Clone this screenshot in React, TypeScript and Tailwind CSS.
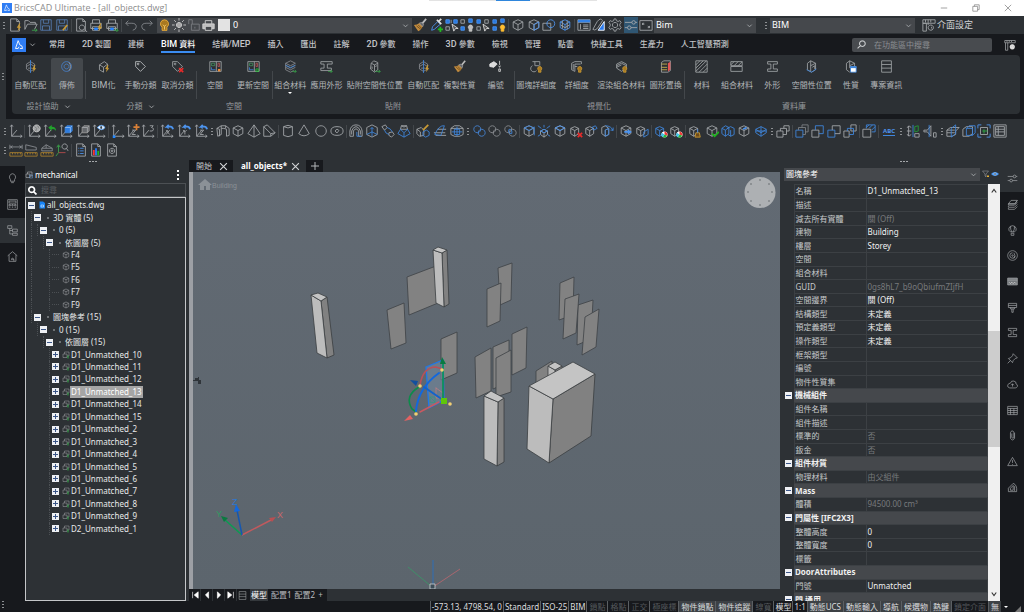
import React, { useState } from 'react';

const G = '#a4a7aa';
const B = '#3f86dc';
const Y = '#c99a35';

// Stroke helper, every glyph is drawn on a 16x16 grid
const p = (d: string, stroke = G, fill = 'none', w = 1) => (
  <path key={d + stroke} d={d} stroke={stroke} fill={fill} strokeWidth={w} />
);

const CUBE = 'M8 2 13.5 4.5V11L8 14 2.500 11V4.500ZM2.500 4.500 8 7.500l5.500-3M8 7.500V14';
const AXES = 'M3 1v13h12M1.500 3 3 1l1.500 2M13 12.500 15 14l-2 1.500M3 14l6-7';
const SMALL_CUBE = 'M6.500 3 11 5v6l-4.500 3L2 11V5ZM2 5l4.500 2.500L11 5M6.500 7.500V14';
const BULB = 'M12 8a2.500 2.500 0 0 1 1.500 4.500V15h-3v-2.500A2.500 2.500 0 0 1 12 8Z';
const CIRCLES = 'M6 2a4 4 0 1 0 .1 0M11 6a4 4 0 1 0 .1 0';
const RULER = 'M1 11h14v4H1ZM4 11v2M7 11v2M10 11v2M13 11v2';
const PAGE = 'M3 1h7l3 3v11H3ZM10 1v3h3';
const PRINTER = 'M4 6V2h8v4M2 6h12v6H2ZM4 10h8v4H4Z';
const BOLT = 'M13 6 10 11h2l-1 4 4-5h-2l1-4Z';
const PALETTE = (
  <g stroke="none">
    <circle cx="12" cy="12" r="3.500" fill="#fff" />
    <path d="M12 12V8.500a3.500 3.500 0 0 1 3 5Z" fill="#f03a3a" />
    <path d="m12 12 3 1.500a3.500 3.500 0 0 1-5 1.500Z" fill="#28b63a" />
    <path d="m12 12-2 3a3.500 3.500 0 0 1-1-5Z" fill="#3fc4ea" />
  </g>
);

const glyphs: Record<string, React.ReactNode> = {
  new: <>{p(PAGE)}{p(BOLT, 'none', Y)}</>,
  open: <>{p('M1 13V3h4l2 2h6v2M1 13l3-6h11l-3 6')}{p('M9 14h6M13 12l2 2-2 1.500', '#3aa34a')}</>,
  save: <>{p('M2 2h12v12H2ZM5 2v4h6V2M4 14V9h8v5', '#5479ab')}</>,
  saveAs: <>{p('M2 2h12v12H2ZM5 2v4h6V2M4 14V9h8v5', '#5479ab')}{p('m9 14 5-6', Y, 'none', 2)}</>,
  preview: <>{p(PAGE)}{p('M9 8a3 3 0 1 0 .1 0M12 13l3 3')}</>,
  printer: p(PRINTER),
  printBolt: <>{p(PRINTER)}{p('M6 11h4v3H6Z', 'none', '#2684ff')}{p(BOLT, 'none', Y)}</>,
  printGo: <>{p(PRINTER)}{p('M6 11h4v3H6Z', 'none', '#2684ff')}{p('M10 14h5M13 12l2 2-2 2', '#3aa34a')}</>,
  undo: p('M5 3 2 6l3 3M2 6h7q5 0 5 4 0 3-4 4', '#83878b'),
  redo: p('m11 3 3 3-3 3M14 6H7q-5 0-5 4 0 3 4 4', '#83878b'),
  bulb: <>{p('M8 1a5 5 0 0 1 3 9v4H5v-4A5 5 0 0 1 8 1Z', '#f0b23c', '#a87820')}{p('M6 7l2 2 2-2M8 9v4', '#ffd675')}</>,
  sun: <>{p('M8 5a3 3 0 1 0 .1 0', '#ccc', '#aaa')}{p('M8 0v3M8 13v3M0 8h3M13 8h3M2.500 2.500l2 2M11.500 11.500l2 2M13.500 2.500l-2 2M4.500 11.500l-2 2', '#ccc')}</>,
  lock: p('M2 2v5M2 2h4v5M5 7h9v7H5ZM9 10v2', '#7b7e82'),
  printSolid: <>{p('M4 6V2h8v4', '#ddd')}{p('M1 6h14v6H1Z', '#ddd', '#bbb')}{p('M4 9h8v5H4Z', '#ddd', '#46494d')}</>,
  brush: <>{p('m15 1-5 6', '#bbb', 'none', 2)}{p('m7 6 3-1 2 2-1 3Z', '#999', '#66696d')}{p('M1 8q4 0 6-2l4 4q-2 4-5 5Z', 'none', '#c08a3e')}{p('M4 9l5 4M6 8l4 4', '#6e4b1b')}</>,
  pick: <>{p('m3 14 1-4 6-6 3 3-7 6Z', '#4d94ee')}{p('m9 2 5 5M11 4l3-3', '#ddd', 'none', 2)}{p('M13 10v6M10 13h6', '#20b820', 'none', 2)}</>,
  gridPick: <>{p('M1 2h4v4H1ZM10 2h4v4h-4Z', '#4d94ee', '#2778df')}{p('M1 10h4v4H1ZM7 2v4')}{p('m8 7 2 8 2-3 3 0Z', '#ddd', '#555')}</>,
  gridBulb: <>{p('M1 2h4v4H1Z')}{p('M10 1h4v4h-4ZM1 10h4v4H1Z', '#4d94ee', '#2778df')}{p(BULB, '#ccc', '#bbb')}</>,
  gridPick2: <>{p('M1 2h4v4H1Z', '#4d94ee', '#2778df')}{p('M10 2h4v4h-4ZM1 10h4v4H1Z')}{p('m8 7 2 8 2-3 3 0Z', '#ddd', '#555')}</>,
  gridLight: <>{p('M1 2h4v4H1ZM10 1h4v4h-4ZM1 10h4v4H1Z', '#4d94ee', '#2778df')}{p(BULB, '#ffbd30', '#ffbd30')}</>,
  cube: p(CUBE),
  cubeEdge: <>{p(CUBE)}{p('M13.500 4.500V11L8 14V7.500Z', '#4d94ee')}</>,
  cubeCircle: <>{p('M1 6h9v8H1Z')}{p('M10 2a4.500 4.500 0 1 0 .1 0', '#4d94ee')}</>,
  cubeBlue: <>{p(CUBE, '#4d94ee')}{p('M5 3v9M10.500 3v10M3 8l5 3 5-3')}</>,
  table: <>{p('M1 2h14v12H1ZM1 5h14')}{p('M1 2h14v3H1Z', 'none', '#3482e5')}{p('M4 7v6M7 8h6M7 10h6M7 12h6')}</>,
  sheets: <>{p('M6 4q4-5 6-1l-6 9q-3 3-5 1Z')}{p('M14 4v10H7Z', '#fff', '#2779ef')}</>,
  gear: <>{p('M8 5a3 3 0 1 0 .1 0')}{p('M7 1h2l.5 2 2 1 2-1 1.500 2-1.500 2v2l1.500 2-1.500 2-2-1-2 1L9 15H7l-.5-2-2-1-2 1L1 11l1.500-2V7L1 5l1.500-2 2 1 2-1Z')}</>,
  sliders: p('M1 5h8M13 5h2M9 5a2 2 0 1 0 4 0 2 2 0 0 0-4 0M1 11h3M8 11h7M4 11a2 2 0 1 0 4 0 2 2 0 0 0-4 0'),
  screen: p('M1 3h14v11H1ZM4 6l2 2M12 11l-2-2M4 8V6h2M12 9v2h-2'),
  ui: <>{p('M1 2h14v4H1ZM1 6h4v9H1ZM4 2v3M7 2v3M10 2v3')}{p('M10 8a3 3 0 1 0 .1 0M11 10v2M7 5v3')}</>,
  uiGear: <>{p('M1 2h14v3H1ZM5 5v10H2V5M4 2v2M7 2v2M10 2v2')}{p('M11 8a2.500 2.500 0 1 0 .1 0M11 7v7M8 11h6', '#ddd', 'none', 2)}</>,
  autoMatch: <>{p('M3 5l5-3 5 3v6l-5 3-5-3ZM3 8l5-3 5 3M5 10h5', '#8b8e92')}{p('M8 0v16', B, 'none', 1)}{p(BOLT, 'none', Y)}</>,
  spread: <>{p('M8 2a6 6 0 1 0 .1 0M8 5a3 3 0 1 0 .1 0', '#4584d4')}{p('M11 3q4 5 0 10', '#9b9ea2')}</>,
  bimify: <>{p('M3 6l6-4 4 3-5 4ZM3 6v6l5 3V9M13 5v5')}{p(BOLT, 'none', Y)}</>,
  tag: p('M2 2h6l6 6-6 6-6-6ZM5 4a1 1 0 1 0 .1 0', '#c2c4c6'),
  tagX: <>{p('M2 2h6l6 6-6 6-6-6ZM5 4a1 1 0 1 0 .1 0')}{p('m10 10 5 5M15 10l-5 5', '#e92929', 'none', 2)}</>,
  room: <>{p('M1 2h14v12H1ZM9 2v12')}{p('M3 4h4v3H3Z', '#43915e')}{p('M11 4h2v4h-2Z', '#b45555')}{p('M3 9v3h5', B)}{p('M11 11h3v3h-3Z', 'none', '#ef8b36')}</>,
  roomUpdate: <>{p('M1 2h14v12H1ZM9 2v12')}{p('M3 4h4v3H3Z', '#43915e')}{p('M11 4h2v4h-2Z', '#b45555')}{p('M3 9v3h5', B)}{p('M11 11h3v3h-3Z', '#20c735', 'none', 1)}</>,
  layers: <>{p('M8 1 14 4 8 7 2 4ZM2 4v8l6 3 4-2M2 6.500l6 3 6-3M2 9l6 3 6-3', '#8b8e92')}{p('M2 6.500l6 3 6-3', B)}{p('M10 14h5M13 12l2 2-2 2', '#3aa34a')}</>,
  profile: <>{p('M1 2h14v3H9v5h5v3H1v-3h4V5H1Z')}{p('M10 14h5M13 12l2 2-2 2', '#3aa34a')}</>,
  location: <>{p('M4 4l3-3 5 2v9l-4 3-5-4ZM4 4l4 2v8M8 6l4-2M9 8l2-1M5 8v3')}{p('M9 14h6M13 12l2 2-2 2', '#3aa34a')}</>,
  number: <>{p('M1 5l5-3 4 3-4 4-5-1Z', '#eee', '#ddd')}{p('M13 1v5M12 7l1 2 1-2M12 11h2v3h-2Z', '#ddd')}</>,
  blockLod: <>{p('M3 2h9v5M3 7a4 4 0 1 0 5 6M6 2v5h5')}{p(BULB, Y, '#a87820')}</>,
  lod: <>{p('M2 4l4-2h8v3M2 4v8l4 2V5h7M4 5v7M6 8h3')}{p(BULB, Y, '#a87820')}</>,
  render: <>{p('M2 5l6-3 6 3v5l-6 4-6-4ZM2 7l6-3 6 3M2 9l6-3')}{p(BULB, Y, '#a87820')}</>,
  override: <>{p('M3 3l3-2h8v12l-3 2H3Z')}{p('M11 4l3-2v10l-3 2Z', 'none', '#e45454')}{p('M3 5h7M3 9h7M3 12h7', '#d6bb50')}</>,
  hatch: p('M1 1h14v14H1ZM1 6l5-5M1 10l9-9M1 14 14 1M5 15 15 5M10 15l5-5'),
  halfHatch: p('M1 2h14v5H1ZM1 8h14v6H1ZM1 6l4-4M5 7l5-5M10 7l5-5'),
  beam: p('M2 2h12v3H9v6h5v3H2v-3h4V5H2Z'),
  spatial: <>{p('M3 4l4-3 6 3v8l-5 3-5-3ZM7 1v13M7 7l6-3M9 9l3-2v4')}{p('M2 12l6 3 6-4', B)}</>,
  props: <>{p('M3 4l4-3 6 3v4M3 4v8l4 3M7 1v9M7 7l6-3')}{p('M8 8h7v7H8Z', '#3f86dc', '#fff')}{p('M8 8h7v2H8Z', 'none', '#3f86dc')}</>,
  info: p('M2 1h12v14H2ZM2 5.500h12M2 10h12'),
  ucs: p(AXES),
  ucsWorld: <>{p(AXES)}{p('M11 1a4 4 0 1 0 .1 0', '#ccc', '#a5a8aa')}{p('M9 3l2 2-1 3M12 2l2 3', '#777')}</>,
  ucsBack: <>{p(AXES)}{p('M6 4l4-3v2q5 0 5 5-2-3-5-2v2Z', 'none', '#22a32c')}</>,
  ucsFace: <>{p(AXES)}{p('M7 4l2-2h6v6l-2 2H7Z', B, '#2e7de0')}{p('M7 4h6v6M13 4l2-2', '#8fbdf3')}</>,
  ucsEntity: <>{p(AXES)}{p('M7 4l2-2h6v6l-2 2H7Z', '#999', '#66696d')}{p('M7 4h6v6M13 4l2-2')}</>,
  ucsView: <>{p(AXES)}{p('M6 4q5-5 9 0-4 5-9 0Z', '#57a0f4', '#e8f1fa')}{p('M10 3h1v2h-1Z', '#123')}</>,
  ucsOrigin: <>{p(AXES)}{p('M2 13h3v3H2Z', 'none', '#2388ff')}</>,
  ucsZ: <>{p(AXES)}{p('M12 0v7M8.500 3.500h7', '#d98037', 'none', 2)}{p('M7 7h4l-4 5h4')}</>,
  ucs3: <>{p(AXES)}{p('M10 2h4l-2 2q4 1 1 4h-3')}</>,
  ucsX: <>{p(AXES)}{p('m7 7 4 5M11 7l-4 5')}{p('M15 6q-1-4-7-3l2-2M8 3l2 2', '#4d94ee', 'none', 2)}</>,
  ucsY: <>{p(AXES)}{p('m7 7 2 2 2-2M9 9v3')}{p('M15 6q-1-4-7-3l2-2M8 3l2 2', '#4d94ee', 'none', 2)}</>,
  ucsZr: <>{p(AXES)}{p('M7 7h4l-4 5h4')}{p('M15 6q-1-4-7-3l2-2M8 3l2 2', '#4d94ee', 'none', 2)}</>,
  polysolid: p('M1 5l5-3h5l4 3v8l-3 1V6L9 5H6v7l-4 2ZM1 5l3 1v8M6 2v3M11 2v3'),
  pyramid: p('M8 1 15 11 8 15 1 11ZM8 1v14'),
  wedge: p('M2 3l4-2 9 9-5 4H2ZM2 3l8 8v3M10 11l5-1'),
  cylinder: p('M3 3v10q5 3 10 0V3M3 3q5-3 10 0-5 3-10 0'),
  cone: p('M8 1 2 11q6 5 12 0Z'),
  sphere: p('M8 2a6 6 0 1 0 .1 0'),
  torus: p('M8 3q7 0 7 5t-7 5-7-5 7-5M8 6q4 1 0 4-4-2 0-4'),
  arch: <>{p('M1 14V8q1-7 7-7t7 7v6h-4V8q-3-5-6 0v6ZM3 12V8q2-5 5-5t5 5v4')}{p('M9 9v5h5', B)}</>,
  extrude: <>{p('M2 4l6-3 6 3M2 4v8l6 3 6-3V4')}{p('M8 14V4M6 6l2-2 2 2M2 12l6-3 6 3', B)}</>,
  sweep: <>{p('M1 3l4-2 2 3-3 3ZM9 10l4-1 2 3-3 3-3-2Z')}{p('M4 7q1 4 5 5M7 4q4 1 6 5', B)}</>,
  loft: <>{p('M5 2h6l1 4H4ZM5 2q3 3 6 0', G)}{p('M4 6 1 11l7 4 7-4-3-5M4 6l4 4 4-4M8 10v5', B)}</>,
  union: <>{p('M1 6l5-2 3 3v6l-5 1-3-3ZM1 6l4 3M5 9v5')}{p('m14 1-6 6', Y, 'none', 2)}{p('M8 9l4-2 3 2v4l-4 2-3-2Z', B)}</>,
  slice: <>{p('M1 10h13M3 13h12M5 6h10')}{p('M2 12q5-11 11-10L9 13Z', B)}</>,
  shell: <>{p('M1 5l4-3h6l4 3v7l-4 2H5l-4-2ZM1 5h14')}{p('M5 6h6v6H5ZM2 9h12M8 3v11', B)}</>,
  circles: p(CIRCLES, '#4584d4'),
  circlesG: p(CIRCLES, '#888b90'),
  circlesX: <>{p(CIRCLES, '#888b90')}{p('M7 6q4 0 3 5-5 0-3-5', B)}</>,
  faceUp: <>{p(CUBE)}{p('M2.500 4.500 8 2l5.500 2.500L8 7.500ZM14 13V3', B)}</>,
  faceOut: <>{p('M8 6l4 2v4l-4 3-4-3V8ZM4 8l4 2 4-2M8 10v5')}{p('M1 2l4 3M15 2l-4 3M4 8l4-2 4 2-4 2ZM15 14l-3-2M1 14l3-2M8 1v3', B)}</>,
  faceTop: <>{p(CUBE)}{p('M2.500 4.500 8 2l5.500 2.500L8 7.500Z', '#4d94ee')}</>,
  faceDel: <>{p(SMALL_CUBE)}{p('m10 10 5 5M15 10l-5 5', '#e92929', 'none', 2)}</>,
  faceCopy: <>{p(SMALL_CUBE)}{p('M9 4l4-2 2 3-4 2Z', B)}</>,
  faceMove: <>{p('M6 2l4 3v7l-4 2-4-3V4ZM6 7v7M6 7l4-2')}{p('M6 2q7 0 9 6M12 7h3V4M6 7l4-2v7l-4 2Z', B)}</>,
  imprint: <>{p(CUBE)}{p('M6 9h6M10 7l3 2-3 2', '#4d94ee', 'none', 2)}</>,
  cubePage: <>{p(SMALL_CUBE)}{p('M10 9l5-3v6l-5 3Z', B)}</>,
  colorB: <>{p(SMALL_CUBE, B)}{PALETTE}</>,
  colorG: <>{p(SMALL_CUBE)}{PALETTE}</>,
  cubeClean: <>{p(SMALL_CUBE)}{p('M9 10h4l1 5H8Z', Y, '#6e4b1b')}{p('M11 6v4', B)}</>,
  cubeCheck: <>{p(CUBE)}{p('m8 11 3 3 5-5', '#1db31d', 'none', 2)}</>,
  cubes: <>{p('M1 5l4-3 4 2v7l-4 3-4-3ZM1 5l4 2 4-3M5 7v7', B)}{p('M7 5l4-2 4 2v7l-4 2-3-2M11 7v7', B)}</>,
  cubeTop: <>{p(CUBE)}{p('M7 6l4-2', '#4d94ee', 'none', 2)}</>,
  mesh: p('M8 3l6 3v4l-6 4-6-4V6ZM2 8h12M8 3v11M2 6l6 4 6-4', B),
  copies: p('M1 8h7v7H1ZM5 8V5h7v7H8M9 5V2h6v6h-3'),
  front: <>{p('M1 7h8v8H1Z', B)}{p('M4 7V4h8v8H9M8 4V1h7v8h-3', '#7d8085')}</>,
  back: <>{p('M1 7h8v8H1Z')}{p('M5 7V2h9v9H9', B)}</>,
  above: <>{p('M1 7h8v8H1Z', B)}{p('M6 7V2h9v9H9')}</>,
  below: <>{p('M1 8h6v7H1ZM9 1h6v7H9Z')}{p('M5 8V5h7v7H7', B)}</>,
  hatchBack: <>{p('M5 1h10v8h-4M5 1v4M5 4l3-3M8 5l4-4M11 7l4-4', B)}{p('M1 6h9v9H1Z')}</>,
  plan: <>{p('M1 4q3-3 5 0M1 8h5M1 12q3 3 5 0M3 2v12')}{p('M8 1v14', B)}{p('M10 3l4-1v6l-4 1Z', '#239c38')}{p('M10 11h5v4h-5Z')}</>,
  elev: <>{p('M1 7h4l4-5v12L5 9H1Z')}{p('M7 1v14', B)}{p('M12 10h3v5h-3Z')}</>,
  sectionA: <>{p('M1 7l4-3h10l-4 4v4l-4 2H1ZM1 7h9M1 10h9')}{p('M6 15V5l5-4v10Z', B)}</>,
  sectionB: <>{p('M1 6l4-3h7v8l-4 3H1Z')}{p('M5 5l3-3h7v8l-3 3H5ZM5 5h7v8', B)}</>,
  clip: <>{p('M1 5V1h4M11 1h4v4M15 11v4h-4M5 15H1v-4', '#4d94ee')}{p('M4 4h8v8H4Z')}{p('M6 8h6M8 6v5', '#2eaa44')}</>,
  sheet: p('M1 1h14v14H1ZM3 3h10v10H3ZM3 6h10M3 9h10M6 3v10'),
  dist: <>{p('M1 2v5M15 2v5M1 4.500h14M4 3l-2 1.500L4 6M12 3l2 1.500L12 6', '#888b90')}{p(RULER, '#a87f2e')}</>,
  area: <>{p('M2 2v6h12V5Z', '#888b90')}{p(RULER, '#a87f2e')}</>,
  volume: <>{p('M2 6l5-4 7 4v3H2ZM2 6h12M7 2v4', '#888b90')}{p(RULER, '#a87f2e')}</>,
  point: <>{p('M4 3v8l-3 4M2 5l2-3 2 3', '#3aa34a')}{p('M4 11h8', '#b74d4d')}{p('M11 1a3 3 0 1 0 .1 0M13 6l2 3')}</>,
  list: <>{p(PAGE)}{p('M5 6h1M5 9h1M5 12h1M7 6h4M7 9h4M7 12h4', '#4d94ee')}</>,
  chart: <>{p(PAGE)}{p('M5.500 8v6', '#f33', 'none', 2)}{p('M8 6v8', '#2b7fff', 'none', 2)}{p('M10.500 9v5', '#1db31d', 'none', 2)}</>,
  docGear: <>{p(PAGE)}{p('M8 6a3 3 0 1 0 .1 0M8 8a1 1 0 1 0 .1 0')}</>,
  lamp: p('M8 1a5 5 0 0 1 3 8.500V12H5V9.500A5 5 0 0 1 8 1ZM6 14h4'),
  calc: p('M1 1h14v14H1ZM3 3h10v3H3ZM3 8h2v2H3ZM7 8h2v2H7ZM11 8h2v2h-2ZM3 12h2M7 12h2M11 12h2'),
  tree: p('M1 1h6v4H1ZM4 5v8h4M4 8h4M8 6h7v4H8ZM8 12h7v3H8Z'),
  house: p('M1 7l7-6 7 6M3 6v9h10V6M6 12h4v3M6 12q2-3 4 0'),
  stack: p('M2 7l4-5h9l-3 5ZM2 7v2h9l4-4M2 10v2h9l4-4M2 13v2h9l4-4M2 7h9l4-5'),
  balloon: p('M8 1a6 5 0 0 1 3 9H5A6 5 0 0 1 8 1ZM5 2q0 5 2 8M11 2q0 5-2 8M6 12h4v3H6Z'),
  target: p('M8 1a7 7 0 1 0 .1 0M8 4a4 4 0 1 0 4 5M8 7a1 1 0 1 0 .1 0M10 4q3 4 0 8'),
  film: <>{p('M1 3h14v10H1ZM1 6h14', G, '#75787c')}{p('M3 9l2 2 2-2 2 2 2-2 2 2', '#ddd')}</>,
  roller: p('M2 2h12v6H2ZM2 5h12M5 8v2h6V8M7 10v5h2v-5'),
  pin: p('M9 1l6 6-3 1-3 3-1 3-6-6 3-1 3-3ZM5 11l-4 4'),
  cloud: p('M4 13q-4-1-3-4t4-3q1-4 5-3t3 4q3 1 2 4-1 2-3 2ZM8 7v4M6 9l2-2 2 2'),
  sheetTable: p('M1 2h14v12H1ZM1 5h14M1 8h14M1 11h14M5 5v9M10 5v9'),
  clipIcon: p('M11 4v8q-3 5-6 0V4q2-5 5-1v8q-1 2-3 0V5'),
  warn: p('M8 2 15 14H1ZM8 6v4M8 12v1'),
  drop: p('M2 14V9l7-7q6 2 5 12ZM5 12V9l4-4v7ZM11 6v7'),
  tinyPlus: <>{p('M2 6h8v7H2ZM5 6V2h9v8h-4')}{p('M12 9v6', '#2eaa44', 'none', 2)}</>,
  layersSmall: <>{p('M2 6h8v7H2ZM5 6V2h9v8h-4', '#c9cbcd')}{p('M9 8h6v6H9Z', '#6f9fd6')}</>,
  file: <>{p('M3 1h7l4 3v11H3Z', 'none', '#1683f7')}{p('M6 8h5v4H6Z', '#fff')}</>,
  filter: <>{p('M1 2h12L8 8v6l-2-2V8Z')}{p('M10 11h4v3h-4Z', 'none', '#e8b234')}</>,
  eye: <>{p('M0 8q8-8 16 0-8 8-16 0Z', 'none', '#4b9af5')}{p('M8 6a2 2 0 1 0 .1 0', '#fff', '#123')}</>,
  search: p('M9.500 1.500a5 5 0 1 0 .1 0M6 10l-5 5', '#c9cbcd', 'none', 2),
  magnifier: p('M6.500 1.500a5 5 0 1 0 .1 0M10 10l5 5', '#fff', 'none', 3),
  down: p('m3 6 5 5 5-5', '#a8abae', 'none', 2),
  logo: <>{p('M0 0h16v16H0Z', 'none', '#2f7df4')}{p('m7 3 2 5q3 0 3 4H9M7 3 4 12h3l1-2', '#fff')}</>,
};

function Icon({ name, className = 'size-[14px]' }: { name: string; className?: string }) {
  return (
    <svg viewBox="0 0 16 16" fill="none" className={`shrink-0 ${className}`} aria-hidden="true">
      {glyphs[name]}
    </svg>
  );
}

// Ribbon labels set their Latin runs one pixel larger than the Chinese ones
function Mixed({ children }: { children: string }) {
  return (
    <>
      {children.split(/([\x21-\x7e]+)/).map((part, i) =>
        i % 2 ? <span key={i} className="font-['Roboto',sans-serif] text-[9px]">{part}</span> : part
      )}
    </>
  );
}

interface ToolGroup {
  mark: 'grip' | 'sep' | 'none';
  width: string;
  icons: string[];
}

const quickGroups: ToolGroup[] = [
  { mark: 'grip', width: 'w-[69px]', icons: ['new', 'open', 'save', 'saveAs'] },
  { mark: 'sep', width: 'w-[50px]', icons: ['preview', 'printBolt', 'printGo'] },
  { mark: 'sep', width: 'w-[35px]', icons: ['undo', 'redo'] },
];

const styleGroups: ToolGroup[] = [
  { mark: 'none', width: 'w-[95px]', icons: ['brush', 'pick', 'gridPick', 'gridBulb', 'gridPick2', 'gridLight'] },
  { mark: 'sep', width: 'w-[66px]', icons: ['cube', 'cubeEdge', 'cubeCircle', 'cubeBlue'] },
  { mark: 'sep', width: 'w-[81px]', icons: ['table', 'sheets', 'gear', 'sliders', 'screen'] },
];

const modelGroups: ToolGroup[] = [
  { mark: 'grip', width: 'w-[21px]', icons: ['ucs'] },
  { mark: 'sep', width: 'w-[84px]', icons: ['ucsWorld', 'ucsBack', 'ucsFace', 'ucsEntity', 'ucsView'] },
  { mark: 'sep', width: 'w-[49px]', icons: ['ucsOrigin', 'ucsZ', 'ucs3'] },
  { mark: 'sep', width: 'w-[53px]', icons: ['ucsX', 'ucsY', 'ucsZr'] },
  { mark: 'grip', width: 'w-[68px]', icons: ['polysolid', 'cube', 'pyramid', 'wedge'] },
  { mark: 'sep', width: 'w-[68px]', icons: ['cylinder', 'cone', 'sphere', 'torus'] },
  { mark: 'sep', width: 'w-[67px]', icons: ['arch', 'extrude', 'sweep', 'loft'] },
  { mark: 'sep', width: 'w-[53px]', icons: ['union', 'slice', 'shell'] },
  { mark: 'grip', width: 'w-[53px]', icons: ['circles', 'circlesG', 'circlesX'] },
  { mark: 'sep', width: 'w-[97px]', icons: ['faceUp', 'faceOut', 'faceTop', 'faceDel', 'faceCopy', 'faceMove'] },
  { mark: 'sep', width: 'w-[35px]', icons: ['imprint', 'cubePage'] },
  { mark: 'sep', width: 'w-[34px]', icons: ['colorB', 'colorG'] },
  { mark: 'sep', width: 'w-[85px]', icons: ['cubeClean', 'cubeCheck', 'cubes', 'cubeTop', 'mesh'] },
  { mark: 'grip', width: 'w-[22px]', icons: ['copies'] },
  { mark: 'sep', width: 'w-[67px]', icons: ['front', 'back', 'above', 'below'] },
  { mark: 'sep', width: 'w-[19px]', icons: ['hatchBack'] },
  { mark: 'sep', width: 'w-[21px]', icons: ['abc'] },
  { mark: 'grip', width: 'w-[41px]', icons: ['plan', 'elev'] },
  { mark: 'grip', width: 'w-[69px]', icons: ['sectionA', 'sectionB', 'clip', 'sheet'] },
];

const measureGroups: ToolGroup[] = [
  { mark: 'grip', width: 'w-[68px]', icons: ['dist', 'area', 'volume', 'point'] },
  { mark: 'sep', width: 'w-[50px]', icons: ['list', 'chart', 'docGear'] },
];

function Grip() {
  return (
    <span className="flex w-[6px] shrink-0 flex-col items-center gap-[2px]">
      <i className="h-px w-[2px] bg-[#8d9093]" />
      <i className="h-px w-[2px] bg-[#8d9093]" />
      <i className="h-px w-[2px] bg-[#8d9093]" />
    </span>
  );
}

function Toolbar({ groups }: { groups: ToolGroup[] }) {
  return (
    <div className="flex items-center">
      {groups.map((group, i) => (
        <div key={i} className={`flex shrink-0 items-center ${group.width}`}>
          {group.mark === 'grip' && <Grip />}
          {group.mark === 'sep' && <span className="mx-px h-[13px] w-px shrink-0 bg-[#43474b]" />}
          <div className="flex flex-1 justify-around">
            {group.icons.map((name) => (
              <button
                key={name}
                aria-label={name}
                className={`flex h-[16px] w-[14px] items-center justify-center ${name === 'sliders' ? 'bg-[#2f5673]' : ''}`}
              >
                {name === 'abc' ? (
                  <span className="border-b border-[#3f86dc] text-[6px] leading-[8px] font-bold text-[#4d94ee]">ABC</span>
                ) : (
                  <Icon name={name} />
                )}
              </button>
            ))}
          </div>
        </div>
      ))}
    </div>
  );
}

interface RibbonGroup {
  title: string;
  width: string;
  more?: boolean;
  items: { icon: string; label: string; active?: boolean; menu?: boolean }[];
}

const ribbonTabs = [
  '常用', '2D 製圖', '建模', 'BIM 資料', '結構/MEP', '插入', '匯出', '註解', '2D 參數',
  '操作', '3D 參數', '檢視', '管理', '點雲', '快捷工具', '生產力', '人工智慧預測',
];

const ribbonGroups: RibbonGroup[] = [
  {
    title: '設計協助', width: 'w-[73px]', more: true,
    items: [{ icon: 'autoMatch', label: '自動匹配' }, { icon: 'spread', label: '傳佈', active: true }],
  },
  {
    title: '分類', width: 'w-[111px]', more: true,
    items: [{ icon: 'bimify', label: 'BIM化' }, { icon: 'tag', label: '手動分類' }, { icon: 'tagX', label: '取消分類' }],
  },
  {
    title: '空間', width: 'w-[76px]',
    items: [{ icon: 'room', label: '空間' }, { icon: 'roomUpdate', label: '更新空間' }],
  },
  {
    title: '貼附', width: 'w-[242px]',
    items: [
      { icon: 'layers', label: '組合材料', menu: true },
      { icon: 'profile', label: '應用外形' },
      { icon: 'location', label: '貼附空間性位置' },
      { icon: 'autoMatch', label: '自動匹配' },
      { icon: 'brush', label: '複製性質' },
      { icon: 'number', label: '編號' },
    ],
  },
  {
    title: '視覺化', width: 'w-[170px]',
    items: [
      { icon: 'blockLod', label: '圖塊詳細度' },
      { icon: 'lod', label: '詳細度' },
      { icon: 'render', label: '渲染組合材料' },
      { icon: 'override', label: '圖形置換' },
    ],
  },
  {
    title: '資料庫', width: 'w-[220px]',
    items: [
      { icon: 'hatch', label: '材料' },
      { icon: 'halfHatch', label: '組合材料' },
      { icon: 'beam', label: '外形' },
      { icon: 'spatial', label: '空間性位置' },
      { icon: 'props', label: '性質' },
      { icon: 'info', label: '專案資訊' },
    ],
  },
];

function TitleBar() {
  return (
    <header className="flex h-[16px] shrink-0 items-center bg-white pl-[2px] text-[9px] text-[#8c8c8c]">
      <Icon name="logo" className="mr-[2px] size-[10px]" />
      <h1 className="flex-1 font-['Open_Sans',sans-serif]">BricsCAD Ultimate - [all_objects.dwg]</h1>
      <div className="flex w-[169px] self-start" aria-hidden="true">
        <i className="h-px flex-2 bg-[#e3e3e3]" />
        <i className="h-px flex-1 bg-[#2f86dc]" />
        <i className="h-px flex-2 bg-[#e3e3e3]" />
      </div>
      <div className="flex flex-1 items-center justify-end gap-[24px] pr-[12px]">
        <button aria-label="最小化"><svg viewBox="0 0 10 10" className="size-[8px]" stroke="#8c8c8c"><path d="M1 5h8" /></svg></button>
        <button aria-label="還原"><svg viewBox="0 0 10 10" className="size-[8px]" stroke="#8c8c8c" fill="none"><path d="M1 3h6v6H1ZM3 3V1h6v6H7" /></svg></button>
        <button aria-label="關閉"><svg viewBox="0 0 10 10" className="size-[8px]" stroke="#8c8c8c"><path d="m1 1 8 8M9 1 1 9" /></svg></button>
      </div>
    </header>
  );
}

function Combo({ label, value, className }: { label: string; value: string; className: string }) {
  return (
    <label className={`flex items-center bg-[#45484c] text-white ${className}`}>
      <select aria-label={label} className="w-full appearance-none bg-transparent px-[2px] outline-none">
        <option>{value}</option>
      </select>
      <Icon name="down" className="mr-[3px] size-[7px]" />
    </label>
  );
}

function QuickAccess() {
  return (
    <div className="flex h-[18px] shrink-0 items-center bg-[#2d3135] pl-px text-[9px]">
      <Toolbar groups={quickGroups} />
      <div className="ml-[2px] flex h-[15px] w-[255px] items-center gap-px bg-[#45484c]">
        <Icon name="bulb" className="ml-px size-[13px]" />
        <Icon name="sun" />
        <Icon name="lock" />
        <Icon name="printSolid" className="size-[13px]" />
        <span className="ml-[2px] size-[12px] shrink-0 bg-[#e3e3e3]" />
        <Combo label="圖層" value="0" className="flex-1" />
      </div>
      <Toolbar groups={styleGroups} />
      <Combo label="工作區" value="Bim" className="h-[15px] w-[102px]" />
      <span className="ml-[7px]"><Grip /></span>
      <Combo label="設定檔" value="BIM" className="ml-px h-[15px] w-[145px]" />
      <button className="ml-[7px] flex items-center gap-px text-[#d0d2d4]">
        <Icon name="ui" />
        介面設定
      </button>
    </div>
  );
}

function Ribbon() {
  const [tab, setTab] = useState('BIM 資料');
  return (
    <section className="flex shrink-0 bg-[#17191d]">
      <div className="flex w-[6px] items-center bg-[#2d3135]"><Grip /></div>
      <div className="min-w-0 flex-1 pr-[4px] pb-[5px] pl-[6px]">
        <div className="flex h-[21px] items-center">
          <button className="flex items-center gap-[3px]" aria-label="應用程式選單">
            <Icon name="logo" />
            <Icon name="down" className="size-[7px]" />
          </button>
          <nav className="ml-[13px] flex gap-[17px] text-[8px] font-medium" role="tablist">
            {ribbonTabs.map((name) => (
              <button
                key={name}
                role="tab"
                aria-selected={tab === name}
                onClick={() => setTab(name)}
                className={`border-b-2 leading-[14px] whitespace-nowrap ${
                  tab === name ? 'border-[#3b8cf0] text-white' : 'border-transparent text-[#c3c5c8]'
                }`}
              >
                <Mixed>{name}</Mixed>
              </button>
            ))}
          </nav>
          <label className="ml-auto flex h-[14px] w-[140px] items-center rounded-[2px] bg-[#484b4f] pl-[5px]">
            <Icon name="search" className="size-[9px]" />
            <input
              aria-label="搜尋功能區"
              placeholder="在功能區中搜尋"
              className="ml-[8px] w-[110px] bg-transparent text-[8px] outline-none placeholder:text-[#8b8e92]"
            />
          </label>
          <button className="mr-[4px] ml-[12px]" aria-label="功能區設定"><Icon name="uiGear" className="size-[12px]" /></button>
        </div>
        <div className="flex h-[59px] rounded-[4px] bg-[#2c3034]">
          {ribbonGroups.map((group, i) => (
            <div key={group.title} className={`relative flex shrink-0 flex-col ${group.width}`}>
              {i > 0 && <span className="absolute top-[16px] left-0 h-[28px] w-px bg-[#43474b]" />}
              <div className="flex h-[45px] justify-around pt-[3px]">
                {group.items.map((item) => (
                  <button
                    key={item.label}
                    className={`flex h-[41px] min-w-[32px] flex-col items-center rounded-[2px] pt-[2px] text-[8px] leading-[12px] whitespace-nowrap text-[#b3b6b9] ${
                      item.active ? 'bg-[#44484c]' : ''
                    }`}
                  >
                    <Icon name={item.icon} className="size-[13px]" />
                    <span className="mt-[6px]"><Mixed>{item.label}</Mixed></span>
                    {item.menu && <span className="mt-px border-x-2 border-t-2 border-x-transparent border-t-white" />}
                  </button>
                ))}
              </div>
              <div className="flex items-center justify-center gap-[5px] text-[8px] leading-[12px] text-[#96999c]">
                {group.title}
                {group.more && <Icon name="down" className="size-[7px]" />}
              </div>
            </div>
          ))}
        </div>
      </div>
    </section>
  );
}

interface TreeRow {
  level: number;
  label: string;
  box?: '-' | '+';
  icon?: string;
  guides: number[];
}

const blockNames = ['10', '11', '12', '13', '14', '15', '2', '3', '4', '5', '6', '7', '8', '9'];

const treeRows: TreeRow[] = [
  { level: 0, label: 'all_objects.dwg', box: '-', icon: 'file', guides: [] },
  { level: 1, label: '3D 實體 (5)', box: '-', guides: [0] },
  { level: 2, label: '0 (5)', box: '-', guides: [0, 1] },
  { level: 3, label: '依圖層 (5)', box: '-', guides: [0, 2] },
  ...['F4', 'F5', 'F6', 'F7', 'F9'].map((label) => ({ level: 4, label, icon: 'cube', guides: [0, 3] })),
  { level: 1, label: '圖塊參考 (15)', box: '-', guides: [0] },
  { level: 2, label: '0 (15)', box: '-', guides: [1] },
  { level: 3, label: '依圖層 (15)', box: '-', guides: [2] },
  ...blockNames.map((n) => ({ level: 4, label: `D1_Unmatched_${n}`, box: '+' as const, icon: 'tinyPlus', guides: [3] })),
  { level: 4, label: 'D2_Unmatched_1', box: '+', icon: 'tinyPlus', guides: [3] },
];

function ExpandBox({ sign }: { sign: '-' | '+' }) {
  return (
    <svg viewBox="0 0 7 7" className="size-[7px] shrink-0" aria-hidden="true">
      <path d="M0 0h7v7H0Z" fill="#eef0f4" />
      <path d={sign === '+' ? 'M1 3.500h5M3.500 1v5' : 'M1 3.500h5'} stroke="#3b5688" />
    </svg>
  );
}

function StructurePanel() {
  const [selected, setSelected] = useState('D1_Unmatched_13');
  return (
    <div className="flex min-h-0 flex-1">
      <nav className="w-[25px] shrink-0 bg-[#17191d]">
        <div className="grid h-[103px] auto-rows-fr">
          {['lamp', 'calc', 'tree', 'house'].map((name) => (
            <button
              key={name}
              aria-label={name}
              className={`flex items-center justify-center ${name === 'tree' ? 'bg-[#2d3135]' : ''}`}
            >
              <Icon name={name} className="size-[11px]" />
            </button>
          ))}
        </div>
      </nav>
      <div className="flex min-w-0 flex-1 flex-col">
        <div className="flex h-[17px] items-center pr-[7px] text-[8px] text-white">
          <Icon name="layersSmall" className="mr-[2px] size-[8px]" />
          <span className="flex-1">mechanical</span>
          <button className="flex flex-col gap-[2px]" aria-label="面板選單">
            <i className="size-[2px] bg-white" />
            <i className="size-[2px] bg-white" />
            <i className="size-[2px] bg-white" />
          </button>
        </div>
        <label className="flex h-[14px] items-center border border-[#4c5054] pl-[2px]">
          <Icon name="magnifier" className="size-[9px]" />
          <input
            aria-label="搜尋結構"
            placeholder="搜尋"
            className="ml-[4px] w-full bg-transparent text-[8px] text-white outline-none placeholder:text-[#585c60]"
          />
        </label>
        <div className="min-h-0 flex-1 overflow-hidden border border-[#c4c6c8] pt-px">
          <ul className="grid h-[336px] auto-rows-fr pl-[2px] text-[8px] text-[#e8e9ea]" role="tree">
            {treeRows.map((row, i) => (
              <li key={i} role="treeitem" aria-selected={row.label === selected} className="flex items-center">
                {Array.from({ length: row.level }, (_, n) => (
                  <span key={n} className="h-full w-[6px] shrink-0 pl-[3px]">
                    {row.guides.includes(n) && <i className="block h-full border-l border-dotted border-[#4c5054]" />}
                  </span>
                ))}
                {row.box ? (
                  <ExpandBox sign={row.box} />
                ) : (
                  <span className="w-[7px] border-t border-dotted border-[#4c5054]" />
                )}
                <span className="ml-[3px] flex w-[8px] shrink-0 justify-center">
                  {row.icon ? (
                    <Icon name={row.icon} className="size-[8px]" />
                  ) : (
                    <i className="size-[2px] rounded-full bg-[#85888b]" />
                  )}
                </span>
                <button
                  onClick={() => setSelected(row.label)}
                  className={`px-px leading-[12px] whitespace-nowrap ${row.label === selected ? 'bg-[#a5a5a5] text-white' : ''}`}
                >
                  {row.label}
                </button>
              </li>
            ))}
          </ul>
        </div>
      </div>
    </div>
  );
}

// Thin door and window panels: outline of the visible face
const plates = [
  '387,310 404,303 406,343 391,349',
  '407,277 436,266 438,303 409,315',
  '498,268 512,263 511,300 500,305',
  '487,289 501,283 500,321 487,327',
  '560,283 574,277 573,315 559,320',
  '578,305 593,300 591,339 577,345',
  '565,299 579,294 576,333 563,339',
  '585,317 599,309 596,347 582,355',
  '441,339 457,332 457,373 441,380',
  '493,347 509,340 509,382 493,389',
  '512,334 527,327 526,368 512,375',
  '475,357 491,348 491,391 476,398',
  '496,358 511,350 511,392 496,397',
  '536,371 552,361 552,380 536,384',
];

const boxes = [
  { top: '311,295 318,293 327,297 321,301', left: '311,295 321,301 327,358 317,353', right: '321,301 327,297 334,355 327,358' },
  { top: '433,250 438,247 447,250 442,253', left: '433,250 442,253 444,307 436,303', right: '442,253 447,250 449,304 444,307' },
  { top: '548,366 555,362 562,366 555,370', left: '548,366 555,370 555,380 548,380', right: '555,370 562,366 562,380 555,380' },
  { top: '529,386 573,362 595,374 553,399', left: '529,386 553,399 549,463 527,449', right: '553,399 595,374 591,436 549,463' },
  { top: '484,396 491,391 504,398 498,402', left: '484,396 498,402 497,466 484,459', right: '498,402 504,398 504,462 497,466' },
];

function Viewport() {
  return (
    <svg
      viewBox="193 172 587 417"
      preserveAspectRatio="xMidYMid slice"
      className="min-h-0 w-full flex-1 border-l-4 border-[#9da0a5] bg-linear-to-b from-[#626a73] to-[#5c656d]"
      role="img"
      aria-label="模型視圖"
    >
      <g fill="#8b9197">
        <path d="m198 185 7-6 7 6h-2v5h-4v-4h-2v4h-4v-5Z" />
        <text x="212" y="188" fontSize="7" fontFamily="Liberation Sans, sans-serif">Building</text>
      </g>
      <circle cx="760" cy="192.500" r="15.500" fill="#adb0b3" />
      <g fill="#63676b">
        {[[760, 180], [769, 184], [772, 192], [769, 201], [760, 205], [751, 201], [748, 192], [751, 184]].map(([x, y]) => (
          <circle key={`${x}-${y}`} cx={x} cy={y} r=".8" />
        ))}
      </g>
      <g fill="#828282" stroke="#3d4145" strokeWidth=".8">
        {plates.map((points) => <polygon key={points} points={points} />)}
      </g>
      {boxes.map((box) => (
        <g key={box.top} stroke="#3a3d40" strokeWidth=".8" strokeLinejoin="round">
          <polygon points={box.right} fill="#818181" />
          <polygon points={box.left} fill="#bcbcbc" />
          <polygon points={box.top} fill="#c4c4c4" />
        </g>
      ))}
      {/* Manipulator on the selected door */}
      <g fill="none" strokeLinecap="round">
        <path d="M426 367 443 360 444 400 429 408Z" fill="#7890a8" fillOpacity=".5" stroke="#1f78ea" strokeWidth="1.300" />
        <path d="M436 388v10h6M436 388l7 5" stroke="#c47d82" strokeWidth=".7" />
        <path d="M430 402v-5h5v5ZM430 397l5 5" stroke="#2f9a82" strokeWidth=".7" />
        <path d="M420 385q3-18 16-18l6 2" stroke="#b9505a" strokeWidth="1.600" />
        <path d="M419 387q-15 9-7 22l4 3" stroke="#0d8b4b" strokeWidth="1.600" />
        <path d="M416 411q2-23 23-38" stroke="#1268dd" strokeWidth="2" />
        <path d="M424 387 443 400" stroke="#1263cc" strokeWidth="2" />
        <path d="M443 400V363" stroke="#079450" strokeWidth="1.600" />
        <path d="M439 402 420 412" stroke="#c85961" strokeWidth="1.500" />
      </g>
      <path d="m440 364 2-7 4 7Z" fill="#0a7a41" />
      <path d="m410 380 8 1-2 5Z" fill="#134f9e" />
      <path d="m404 421 6-6 3 4Z" fill="#e36262" />
      <g fill="#f2cf74">
        <circle cx="420" cy="386" r="1.800" />
        <circle cx="442" cy="370" r="1.800" />
        <circle cx="416" cy="414" r="1.800" />
        <circle cx="450" cy="404" r="1.800" />
      </g>
      <path d="M441 398h6v6h-6Z" fill="#5fc60a" />
      {/* UCS icon */}
      <g strokeWidth="1.500">
        <path d="M242 535 224 519" stroke="#0b9c52" />
        <path d="m221 516 3 6 4-4Z" fill="#0a7a41" />
        <path d="M242 535 273 519" stroke="#c05a5e" />
        <path d="m276 517-7 1 3 4Z" fill="#b84f52" />
        <path d="M242 535 237 510" stroke="#1557b0" />
        <path d="m236 504-2 8 6-1Z" fill="#1268dd" />
      </g>
      <g fontSize="9" fontFamily="Liberation Sans, sans-serif">
        <text x="216" y="517" fill="#2f9a62">Y</text>
        <text x="232" y="505" fill="#2e78cf">Z</text>
        <text x="277" y="518" fill="#c8666b">X</text>
      </g>
      <path d="M433 587V560" stroke="#2f6fb5" />
      <path d="M432 587 408 567" stroke="#3f8f68" />
      <path d="M433 587 460 569" stroke="#a9676f" />
      <path d="M430 584h5v5h-5Z" fill="#3d4d58" stroke="#cbd0d4" strokeWidth=".8" />
      <path d="M189 380.500h12M198.500 377v7" stroke="#30353a" />
      <path d="M195 378h3v3h-3ZM198 381h3v3h-3Z" fill="#30353a" />
    </svg>
  );
}

function Close() {
  return (
    <svg viewBox="0 0 8 8" className="size-[9px]" stroke="#d2d4d6" aria-hidden="true"><path d="m1 1 6 6M7 1 1 7" /></svg>
  );
}

function DrawingArea() {
  const arrows = ['M2 1v8M9 1 4 5l5 4Z', 'M7 1 3 5l4 4Z', 'm3 1 4 4-4 4Z', 'M8 1v8M1 1l5 4-5 4Z'];
  return (
    <main className="flex min-w-0 flex-1 flex-col">
      <div className="flex h-[12px] items-stretch gap-px text-[8px] leading-[12px] text-[#c3c5c8]">
        <button className="flex w-[44px] items-center justify-between bg-[#17191d] pr-[5px] pl-[7px]">開始<Close /></button>
        <button className="flex w-[71px] items-center justify-between pr-[5px] pl-[7px] font-bold text-white">
          all_objects*<Close />
        </button>
        <button className="flex w-[17px] items-center justify-center bg-[#17191d]" aria-label="新圖面">
          <svg viewBox="0 0 8 8" className="size-[8px]" stroke="#b4b7ba"><path d="M4 0v8M0 4h8" /></svg>
        </button>
      </div>
      <Viewport />
      <div className="flex h-[12px] shrink-0 text-[8px] leading-[12px] text-[#b8babd]">
        {arrows.map((d) => (
          <button key={d} aria-label="切換配置" className="mr-px flex w-[11px] items-center justify-center bg-[#17191d]">
            <svg viewBox="0 0 10 10" className="size-[8px]" fill="#fff" stroke="#fff" strokeWidth=".8"><path d={d} /></svg>
          </button>
        ))}
        <div className="flex gap-[3px] bg-[#17191d] pr-[4px]">
          <button aria-label="配置清單" className="flex items-center pl-px"><Icon name="info" className="size-[9px]" /></button>
          <button className="bg-[#34383c] px-px text-white">模型</button>
          <button>配置1</button>
          <button>配置2</button>
          <button>+</button>
        </div>
      </div>
    </main>
  );
}

interface PropRow {
  name: string;
  value?: string;
  dim?: boolean;
  head?: boolean;
}

const propRows: PropRow[] = [
  { name: '名稱', value: 'D1_Unmatched_13' },
  { name: '描述' },
  { name: '減去所有實體', value: '關 (Off)', dim: true },
  { name: '建物', value: 'Building' },
  { name: '樓層', value: 'Storey' },
  { name: '空間' },
  { name: '組合材料' },
  { name: 'GUID', value: '0gs8hL7_b9oQbiufmZIjfH', dim: true },
  { name: '空間邊界', value: '關 (Off)' },
  { name: '結構類型', value: '未定義' },
  { name: '預定義類型', value: '未定義' },
  { name: '操作類型', value: '未定義' },
  { name: '框架類型' },
  { name: '編號' },
  { name: '物件性質集' },
  { name: '機械組件', head: true },
  { name: '組件名稱' },
  { name: '組件描述' },
  { name: '標準的', value: '否', dim: true },
  { name: '鈑金', value: '否', dim: true },
  { name: '組件材質', head: true },
  { name: '物理材料', value: '由父組件', dim: true },
  { name: 'Mass', head: true },
  { name: '體積', value: '94500.00 cm³', dim: true },
  { name: '門屬性 [IFC2X3]', head: true },
  { name: '整體高度', value: '0' },
  { name: '整體寬度', value: '0' },
  { name: '標籤' },
  { name: 'DoorAttributes', head: true },
  { name: '門號', value: 'Unmatched' },
  { name: '門 通用', head: true },
];

function PropertiesPanel() {
  return (
    <div className="flex min-h-0 flex-1">
      <div className="flex min-w-0 flex-1 flex-col">
        <div className="mt-px flex h-[14px] shrink-0 items-center text-[8px]">
          <Combo label="選取類型" value="圖塊參考" className="h-[13px] w-[196px]" />
          <button aria-label="篩選" className="ml-[2px]"><Icon name="filter" className="size-[8px]" /></button>
          <button aria-label="顯示" className="ml-px"><Icon name="eye" className="size-[8px]" /></button>
        </div>
        <div className="mt-[3px] flex min-h-0 flex-1 overflow-hidden">
          <div className="min-w-0 flex-1 overflow-hidden">
            <table className="h-[422px] w-full table-fixed border-collapse text-[8px] leading-[12px] text-[#c6c8ca]">
              <colgroup>
                <col className="w-[10px]" />
                <col className="w-[72px]" />
                <col />
              </colgroup>
              <tbody>
                {propRows.map((row) =>
                  row.head ? (
                    <tr key={row.name}>
                      <td className="p-0 pl-px"><ExpandBox sign="-" /></td>
                      <th colSpan={2} className="bg-[#45484c] p-0 pl-px text-left font-bold text-[#f0f0f0]">
                        {row.name}
                      </th>
                    </tr>
                  ) : (
                    <tr key={row.name}>
                      <td className="p-0" />
                      <th className="border border-[#3c4044] p-0 pl-px text-left font-normal whitespace-nowrap">
                        {row.name}
                      </th>
                      <td className={`border border-[#3c4044] p-0 pl-px whitespace-nowrap ${row.dim ? 'text-[#77797c]' : 'text-[#f0f0f1]'}`}>
                        {row.value}
                      </td>
                    </tr>
                  )
                )}
              </tbody>
            </table>
          </div>
          <div className="flex w-[12px] shrink-0 flex-col items-center bg-[#f0f0f0] py-[4px]" aria-hidden="true">
            <svg viewBox="0 0 8 8" className="size-[6px]" stroke="#333" fill="none" strokeWidth="1.500"><path d="m1 6 3-4 3 4" /></svg>
            <div className="mt-[137px] h-[116px] w-full bg-[#cdcdcd]" />
            <svg viewBox="0 0 8 8" className="mt-auto size-[6px]" stroke="#333" fill="none" strokeWidth="1.500"><path d="m1 2 3 4 3-4" /></svg>
          </div>
        </div>
      </div>
      <nav className="w-[24px] shrink-0 bg-[#17191d]">
        <div className="grid h-[334px] auto-rows-fr">
          {['sliders', 'stack', 'balloon', 'target', 'film', 'roller', 'beam', 'pin', 'cloud', 'sheetTable', 'clipIcon', 'warn', 'drop'].map((name) => (
            <button
              key={name}
              aria-label={name}
              className={`flex items-center justify-center ${name === 'sliders' ? 'bg-[#2d3135]' : ''}`}
            >
              <Icon name={name} className="size-[11px]" />
            </button>
          ))}
        </div>
      </nav>
    </div>
  );
}

const statusItems: { label: string; state?: 'on' | 'off' }[] = [
  { label: '-573.13, 4798.54, 0' },
  { label: 'Standard' },
  { label: 'ISO-25' },
  { label: 'BIM' },
  { label: '鎖點', state: 'off' },
  { label: '格點', state: 'off' },
  { label: '正交', state: 'off' },
  { label: '極座標', state: 'off' },
  { label: '物件鎖點', state: 'on' },
  { label: '物件追蹤', state: 'on' },
  { label: '線寬', state: 'off' },
  { label: '模型' },
  { label: '1:1' },
  { label: '動態UCS', state: 'on' },
  { label: '動態輸入', state: 'on' },
  { label: '導航', state: 'on' },
  { label: '候選物', state: 'on' },
  { label: '熱鍵', state: 'on' },
  { label: '鎖定介面', state: 'off' },
  { label: '無', state: 'on' },
];

function StatusBar() {
  return (
    <footer className="flex h-[11px] shrink-0 items-stretch justify-end bg-[#17191d] text-[8px] leading-[11px] text-[#dcdddf]">
      <span className="mr-auto"><Grip /></span>
      {statusItems.map((item) => (
        <button
          key={item.label}
          className={`border-l border-[#5b5f63] whitespace-nowrap ${
            item.state === 'on' ? 'bg-[#3d4145] px-[2px]' : item.state === 'off' ? 'px-[2px] text-[#54585c]' : 'px-px'
          }`}
        >
          {item.label}
        </button>
      ))}
      <span className="flex w-[23px] items-center justify-between px-[3px]">
        <i className="border-x-2 border-t-2 border-x-transparent border-t-white" />
        <svg viewBox="0 0 6 6" className="size-[6px] self-end" fill="#777"><path d="M6 0v6H0Z" /></svg>
      </span>
    </footer>
  );
}

function Dots() {
  return (
    <span className="flex h-[6px] justify-center gap-px pt-px" aria-hidden="true">
      <i className="h-px w-[2px] bg-[#a4a7aa]" />
      <i className="h-px w-[2px] bg-[#a4a7aa]" />
      <i className="h-px w-[2px] bg-[#a4a7aa]" />
    </span>
  );
}

export default function App() {
  return (
    <div className="flex h-screen flex-col overflow-hidden bg-[#2d3135] font-['Noto_Sans','Noto_Sans_CJK_TC',sans-serif]">
      <TitleBar />
      <QuickAccess />
      <Ribbon />
      <div className="flex h-[41px] shrink-0 flex-col gap-[3px] overflow-hidden pt-[4px] pl-[2px]">
        <Toolbar groups={modelGroups} />
        <Toolbar groups={measureGroups} />
      </div>
      <div className="flex min-h-0 flex-1">
        <aside className="mr-[3px] flex w-[186px] shrink-0 flex-col">
          <Dots />
          <StructurePanel />
        </aside>
        <DrawingArea />
        <aside className="ml-[4px] flex w-[240px] shrink-0 flex-col">
          <Dots />
          <PropertiesPanel />
        </aside>
      </div>
      <StatusBar />
    </div>
  );
}
